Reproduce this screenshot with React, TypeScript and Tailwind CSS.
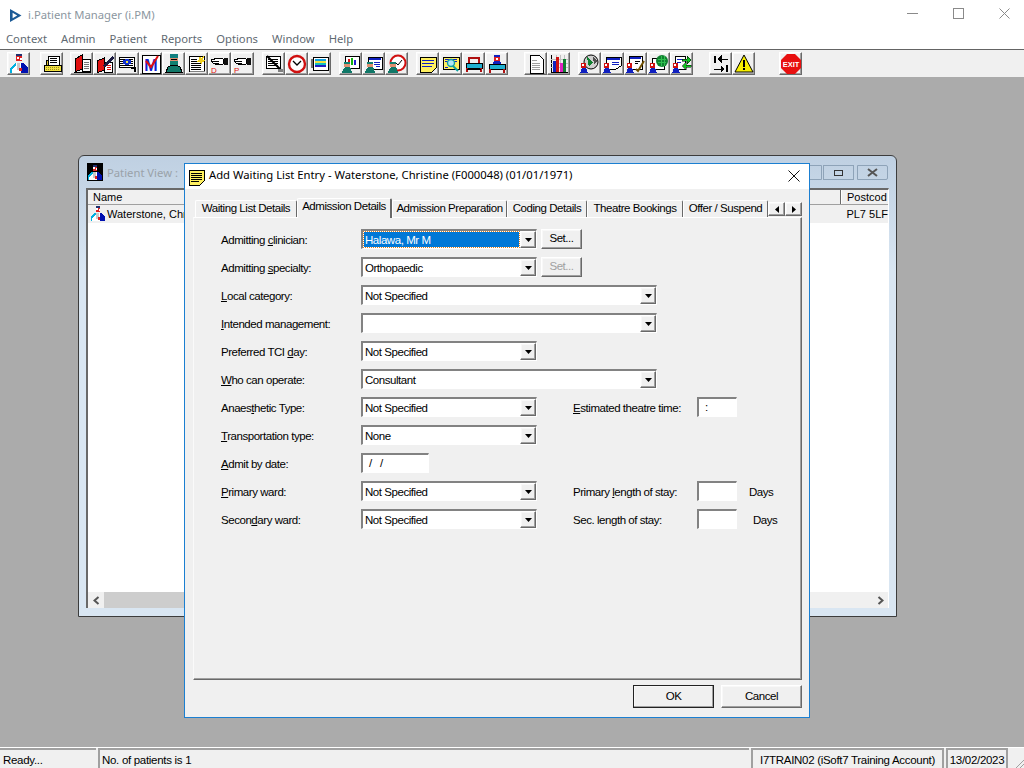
import type { ReactNode } from "react";

const font = "font-['Liberation_Sans',Arial,sans-serif]";
const uiFont = "font-['Noto_Sans',sans-serif] text-[11.25px]";
const raised =
  "border border-t-white border-l-white border-r-[#696969] border-b-[#696969] shadow-[inset_-1px_-1px_0_#a0a0a0,inset_1px_1px_0_#f8f8f8] bg-[#f0f0f0]";
const sunken =
  "border-t-2 border-l-2 border-r border-b border-t-[#828282] border-l-[#828282] border-r-white border-b-white bg-white";

// ---- little bitmap style pictures for the toolbar
function Ico({ children }: { children: ReactNode }) {
  return (
    <svg width="20" height="20" viewBox="0 0 20 20" shapeRendering="crispEdges">
      {children}
    </svg>
  );
}

function Doctor({ size = 20 }: { size?: number }) {
  return (
    <svg width={size} height={size} viewBox="0 0 20 20" shapeRendering="crispEdges">
      <rect x="7" y="0" width="6" height="2" fill="#203070" />
      <rect x="7" y="2" width="6" height="5" fill="#e02020" />
      <rect x="8" y="3" width="2" height="2" fill="#fff" />
      <rect x="11" y="4" width="2" height="2" fill="#fff" />
      <path d="M1 19 L1 14 L6 9 L14 9 L19 14 L19 19 Z" fill="#fff" />
      <path d="M1 19 L1 14 L6 9 L7 9 L7 11 L3 15 L3 19 Z" fill="#00b0e0" />
      <path d="M12 9 H14 L19 14 V19 H12 Z" fill="#0010b0" />
      <rect x="8" y="9" width="3" height="7" fill="#c8c8c8" />
      <rect x="10" y="14" width="3" height="3" fill="#e02020" />
    </svg>
  );
}

const Printer = () => (
  <Ico>
    <rect x="6" y="2" width="11" height="9" fill="#fff" stroke="#000" />
    <path d="M8 4h7M8 6h7M8 8h7" stroke="#000" />
    <path d="M4 6h2v5H4z" fill="#d8c030" stroke="#000" />
    <rect x="2" y="11" width="17" height="6" fill="#f0e040" stroke="#000" />
    <path d="M4 13h13M4 15h13" stroke="#a09020" strokeDasharray="1 1" />
  </Ico>
);
const RedBook = () => (
  <Ico>
    <path d="M3 5 L10 1 L10 15 L3 18 Z" fill="#e01010" stroke="#000" />
    <rect x="10" y="5" width="8" height="12" fill="#fff" stroke="#000" />
    <path d="M12 8h5M12 10h5M12 12h5M12 14h5" stroke="#777" />
    <rect x="2" y="18" width="17" height="1" fill="#000" />
  </Ico>
);
const BookPen = () => (
  <Ico>
    <path d="M2 7 L9 4 L9 16 L2 19 Z" fill="#e01010" stroke="#000" />
    <rect x="9" y="8" width="8" height="10" fill="#fff" stroke="#000" />
    <path d="M8 12 L17 2 L19 4 L10 14 Z" fill="#1a1a40" />
    <path d="M12 11h4M12 13h4M12 15h4" stroke="#e01010" />
  </Ico>
);
const EyeDoc = () => (
  <Ico>
    <rect x="1" y="3" width="15" height="10" fill="#fff" stroke="#000" />
    <path d="M2 5h13M2 7h13M2 9h13M2 11h13" stroke="#000" />
    <ellipse cx="9" cy="8" rx="4" ry="3" fill="#1030d0" />
    <circle cx="9" cy="8" r="1" fill="#f0e040" />
    <path d="M13 13h5v5h-2v-3h-3z" fill="#000" />
  </Ico>
);
const MLetter = () => (
  <Ico>
    <rect x="1" y="1" width="18" height="18" fill="#fff" stroke="#000" />
    <text x="10" y="17" textAnchor="middle" fontSize="16" fontWeight="700" fontFamily="Liberation Sans" fill="#1020d0">
      M
    </text>
    <path d="M5 7 L10 13 L17 2" fill="none" stroke="#e01010" strokeWidth="2" shapeRendering="auto" />
  </Ico>
);
const Surgeon = () => (
  <Ico>
    <rect x="6" y="0" width="8" height="4" fill="#108080" />
    <rect x="6" y="4" width="8" height="3" fill="#e09070" />
    <rect x="7" y="5" width="6" height="1" fill="#000" />
    <rect x="6" y="7" width="8" height="4" fill="#108070" />
    <path d="M2 18 L4 13 L8 11 L12 11 L16 13 L18 18 Z" fill="#107868" stroke="#000" />
  </Ico>
);
const NoteStar = () => (
  <Ico>
    <rect x="2" y="2" width="15" height="15" fill="#fff" stroke="#000" />
    <path d="M4 5h6M4 7h6M4 9h10M4 11h10M4 13h10M4 15h10" stroke="#000" />
    <path d="M13 1l1 3 3-2-1 4 3 1-4 1 0 3-2-3-3 0 2-3z" fill="#f0d020" />
    <rect x="3" y="17" width="15" height="1" fill="#808080" />
  </Ico>
);
const Hand = ({ letter }: { letter: string }) => (
  <Ico>
    <path d="M1 6 L8 4 L13 5 L13 10 L7 11 L3 9 Z" fill="#fff" stroke="#000" />
    <path d="M3 7h6M4 9h5" stroke="#000" />
    <rect x="14" y="4" width="4" height="7" fill="#101010" />
    <text x="1" y="19" fontSize="8" fontFamily="Liberation Sans" fill="#e01010">
      {letter}
    </text>
  </Ico>
);
const NoteCross = () => (
  <Ico>
    <rect x="2" y="2" width="14" height="12" fill="#fff" stroke="#000" />
    <path d="M4 5h10M4 7h10M4 9h10M4 11h10" stroke="#000" />
    <path d="M3 2 L18 17" stroke="#000" strokeWidth="2" shapeRendering="auto" />
    <rect x="14" y="15" width="5" height="3" fill="#808080" />
  </Ico>
);
const Clock = () => (
  <Ico>
    <circle cx="10" cy="10" r="8" fill="#fff" stroke="#d01010" strokeWidth="2.4" shapeRendering="auto" />
    <path d="M6 7 L10 11 L14 7" fill="none" stroke="#000" strokeWidth="1.3" shapeRendering="auto" />
  </Ico>
);
const Screen = () => (
  <Ico>
    <rect x="3" y="3" width="15" height="13" fill="#fff" stroke="#000" />
    <rect x="5" y="5" width="11" height="2" fill="#10a0e0" />
    <rect x="5" y="7" width="11" height="2" fill="#f0e040" />
    <rect x="5" y="9" width="11" height="2" fill="#10c0c0" />
    <rect x="5" y="11" width="11" height="2" fill="#2020c0" />
    <rect x="1" y="5" width="2" height="9" fill="#707070" />
  </Ico>
);
const SurgeonBadge = ({ children }: { children: ReactNode }) => (
  <Ico>
    {children}
    <rect x="3" y="10" width="6" height="3" fill="#e09070" />
    <rect x="3" y="8" width="6" height="2" fill="#108070" />
    <path d="M1 19 L2 15 L4 13 L8 13 L10 15 L11 19 Z" fill="#107868" />
  </Ico>
);
const SurgeonChart = () => (
  <SurgeonBadge>
    <rect x="4" y="2" width="14" height="12" fill="#fff" stroke="#000" />
    <rect x="7" y="5" width="2" height="6" fill="#e01010" />
    <rect x="10" y="4" width="2" height="7" fill="#10b010" />
    <rect x="13" y="6" width="2" height="5" fill="#2020d0" />
  </SurgeonBadge>
);
const SurgeonForm = () => (
  <SurgeonBadge>
    <rect x="4" y="3" width="14" height="12" fill="#fff" stroke="#000" />
    <rect x="5" y="4" width="12" height="2" fill="#1020c0" />
    <path d="M10 8h6M10 10h6M12 12h4" stroke="#1020c0" />
  </SurgeonBadge>
);
const SurgeonClock = () => (
  <SurgeonBadge>
    <circle cx="11" cy="9" r="7.5" fill="#fff" stroke="#d01010" strokeWidth="2" shapeRendering="auto" />
    <path d="M8 8 L11 11 L15 6" fill="none" stroke="#000" shapeRendering="auto" />
  </SurgeonBadge>
);
const YellowNote = () => (
  <Ico>
    <path d="M2 3 H18 V14 L14 18 H2 Z" fill="#fff060" stroke="#000" />
    <path d="M4 6h12M4 9h12M4 12h10" stroke="#1020c0" />
  </Ico>
);
const NoteSearch = () => (
  <Ico>
    <path d="M2 3 H18 V15 H2 Z" fill="#fff060" stroke="#000" />
    <path d="M4 5h12M4 7h3M13 7h3M4 13h3" stroke="#1020c0" />
    <circle cx="10" cy="9" r="3.5" fill="#b0e8f8" stroke="#10a0a0" strokeWidth="1.4" shapeRendering="auto" />
    <path d="M12 12 L17 17" stroke="#10a0a0" strokeWidth="2" shapeRendering="auto" />
  </Ico>
);
const Bed = () => (
  <Ico>
    <path d="M5 9 V4 H15 V9" fill="none" stroke="#b01010" strokeWidth="1.5" />
    <rect x="2" y="9" width="16" height="5" fill="#20b0d0" stroke="#000" />
    <path d="M3 14 V18 M17 14 V18" stroke="#b01010" strokeWidth="2" />
    <rect x="3" y="15" width="14" height="1" fill="#000" />
  </Ico>
);
const BedPerson = () => (
  <Ico>
    <rect x="7" y="1" width="6" height="2" fill="#1020c0" />
    <rect x="7" y="3" width="6" height="4" fill="#e02020" />
    <rect x="9" y="4" width="2" height="2" fill="#fff" />
    <path d="M5 11 L7 7 H13 L15 11 Z" fill="#1020c0" />
    <rect x="2" y="10" width="16" height="5" fill="#20b0d0" stroke="#000" />
    <path d="M3 15 V19 M17 15 V19" stroke="#b01010" strokeWidth="2" />
  </Ico>
);
const Page = () => (
  <Ico>
    <path d="M4 1 H13 L17 5 V19 H4 Z" fill="#fff" stroke="#000" />
    <path d="M6 6h5M6 9h8M6 11h8M6 13h8M6 15h8" stroke="#a0a0a0" />
  </Ico>
);
const Bars = () => (
  <Ico>
    <path d="M2 1 V18 H19" fill="none" stroke="#000" />
    <path d="M2 5h17M2 9h17M2 13h17M7 1v17M11 1v17M15 1v17" stroke="#c0c0c0" />
    <rect x="4" y="7" width="3" height="11" fill="#1020c0" />
    <rect x="7" y="3" width="3" height="15" fill="#d01010" />
    <rect x="11" y="9" width="3" height="9" fill="#e020c0" />
    <rect x="14" y="5" width="3" height="13" fill="#108030" />
  </Ico>
);
const SmallDoc = () => (
  <>
    <rect x="1" y="9" width="5" height="5" fill="#d01010" />
    <rect x="2" y="10" width="2" height="2" fill="#fff" />
    <path d="M0 19 L2 14 H6 L8 19 Z" fill="#1020c0" />
  </>
);
const GlobeDoc = () => (
  <Ico>
    <circle cx="11" cy="8" r="7" fill="#d0d0d0" stroke="#000" shapeRendering="auto" />
    <path d="M7 3 L13 8 L9 13 Z" fill="#108030" />
    <path d="M13 3 L17 7 L14 11 Z" fill="#505050" />
    <SmallDoc />
  </Ico>
);
const FormDoc = () => (
  <Ico>
    <path d="M3 3 H18 V12 L13 15 H3 Z" fill="#fff" stroke="#000" />
    <rect x="4" y="4" width="13" height="2" fill="#1020c0" />
    <path d="M9 8h7M9 10h7" stroke="#1020c0" />
    <SmallDoc />
  </Ico>
);
const TickDoc = () => (
  <Ico>
    <rect x="3" y="2" width="13" height="13" fill="#fff" stroke="#000" />
    <rect x="4" y="3" width="11" height="2" fill="#1020c0" />
    <path d="M9 7h5M9 9h3" stroke="#000" />
    <path d="M10 15 L12 17 L18 7" fill="none" stroke="#705000" strokeWidth="2" shapeRendering="auto" />
    <SmallDoc />
  </Ico>
);
const GreenGlobeDoc = () => (
  <Ico>
    <rect x="3" y="4" width="12" height="11" fill="#fff" stroke="#000" />
    <circle cx="13" cy="7" r="6" fill="#108030" shapeRendering="auto" />
    <path d="M9 5h8M9 8h8M12 2v10M15 2v10" stroke="#30c050" />
    <SmallDoc />
  </Ico>
);
const ArrowsDoc = () => (
  <Ico>
    <rect x="3" y="2" width="10" height="13" fill="#fff" stroke="#000" />
    <path d="M5 5h6M5 8h4" stroke="#1020c0" />
    <path d="M10 5h5V2l4 4-4 4V7h-5z" fill="#10c020" stroke="#000" strokeWidth="0.5" />
    <path d="M19 11h-5V8l-4 4 4 4v-3h5z" fill="#10c020" stroke="#000" strokeWidth="0.5" />
    <SmallDoc />
  </Ico>
);
const Split = () => (
  <Ico>
    <path d="M4 2 V9 M16 11 V18" stroke="#000" strokeWidth="1.5" />
    <path d="M17 5 H7 M7 5 L10 2 V8 Z" stroke="#000" fill="#000" />
    <path d="M3 15 H13 M13 15 L10 12 V18 Z" stroke="#000" fill="#000" />
  </Ico>
);
const Warning = () => (
  <Ico>
    <path d="M10 1 L19 18 H1 Z" fill="#f8f000" stroke="#000" shapeRendering="auto" />
    <rect x="9" y="6" width="2" height="7" fill="#000" />
    <rect x="9" y="14" width="2" height="2" fill="#000" />
  </Ico>
);
const ExitSign = () => (
  <Ico>
    <path d="M6 0 H14 L20 6 V14 L14 20 H6 L0 14 V6 Z" fill="#e81010" shapeRendering="auto" />
    <text x="10" y="13" textAnchor="middle" fontSize="7.5" fontWeight="700" fontFamily="Liberation Sans" fill="#fff">
      EXIT
    </text>
  </Ico>
);

const toolbar: ReactNode[][] = [
  [<Doctor key="a" />],
  [<Printer key="a" />],
  [
    <RedBook key="a" />,
    <BookPen key="b" />,
    <EyeDoc key="c" />,
    <MLetter key="d" />,
    <Surgeon key="e" />,
    <NoteStar key="f" />,
    <Hand key="g" letter="D" />,
    <Hand key="h" letter="P" />,
  ],
  [<NoteCross key="a" />, <Clock key="b" />, <Screen key="c" />],
  [<SurgeonChart key="a" />, <SurgeonForm key="b" />, <SurgeonClock key="c" />],
  [<YellowNote key="a" />, <NoteSearch key="b" />, <Bed key="c" />, <BedPerson key="d" />],
  [<Page key="a" />, <Bars key="b" />],
  [<GlobeDoc key="a" />, <FormDoc key="b" />, <TickDoc key="c" />, <GreenGlobeDoc key="d" />, <ArrowsDoc key="e" />],
  [<Split key="a" />, <Warning key="b" />],
  [<ExitSign key="a" />],
];
// left margin in front of each button group
const groupMargins = ["ml-[7px]", "ml-[10px]", "ml-[7px]", "ml-[8px]", "ml-[8px]", "ml-[8px]", "ml-[16px]", "ml-[8px]", "ml-[16px]", "ml-[24px]"];

const Arrow = ({ dir }: { dir: "down" | "left" | "right" }) => {
  const d = dir === "down" ? "M0 0h7L3.5 4z" : dir === "left" ? "M4 0v7L0 3.5z" : "M0 0v7L4 3.5z";
  const [w, h] = dir === "down" ? [7, 4] : [4, 7];
  return (
    <svg width={w} height={h} viewBox={`0 0 ${w} ${h}`}>
      <path d={d} fill="#000" />
    </svg>
  );
};

function Label({ text, u, w = "w-[140px]" }: { text: string; u: number; w?: string }) {
  return (
    <span className={`${w} shrink-0 text-black pt-[4px]`}>
      {text.slice(0, u)}
      <span className="underline">{text[u]}</span>
      {text.slice(u + 1)}
    </span>
  );
}

function Combo({ value, wide, focused }: { value: string; wide?: boolean; focused?: boolean }) {
  return (
    <div className={`${sunken} ${wide ? "w-[296px]" : "w-[176px]"} h-[20px] flex items-stretch shrink-0`}>
      <div className="flex-1 min-w-0 p-[1px] flex">
        <div
          className={
            focused
              ? "flex-1 bg-[#0078d7] text-white pl-[1px] leading-[16px] outline-1 outline-dotted outline-[#e08020]"
              : "flex-1 pl-[1px] leading-[16px]"
          }
        >
          {value}
        </div>
      </div>
      <div className={`${raised} w-[16px] flex items-center justify-center`}>
        <Arrow dir="down" />
      </div>
    </div>
  );
}

const TextBox = ({ w, value }: { w: string; value?: string }) => (
  <div className={`${sunken} ${w} h-[20px] leading-[16px] pl-[6px] shrink-0 whitespace-pre`}>{value}</div>
);

const SetButton = ({ disabled }: { disabled?: boolean }) => (
  <div className={`${raised} ml-[4px] w-[41px] h-[20px] flex items-center justify-center ${disabled ? "text-[#a0a0a0]" : ""}`}>
    Set...
  </div>
);

const Row = ({ children }: { children: ReactNode }) => (
  <div className="h-[20px] flex items-center">{children}</div>
);

const tabs = [
  { label: "Waiting List Details", w: "w-[102px]" },
  { label: "Admission Details", w: "w-[95px]", active: true },
  { label: "Admission Preparation", w: "w-[115px]" },
  { label: "Coding Details", w: "w-[80px]" },
  { label: "Theatre Bookings", w: "w-[96px]" },
  { label: "Offer / Suspend", w: "w-[85px]" },
];

function PatientView() {
  return (
    <div className="absolute left-[78px] top-[78px] w-[819px] h-[462px] rounded-t-[6px] border border-[#3c3c3c] bg-[#d6e4f1] bg-gradient-to-b from-[#bfd0e2] to-[#d9e6f2] to-[25%]">
      <div className="h-[32px] flex items-center pl-[8px] relative">
        <div className="bg-black h-[18px] w-[16px] flex items-end">
          <Doctor size={16} />
        </div>
        <span className={`ml-[4px] pt-[2px] text-[#9aa2a9] ${uiFont}`}>Patient View :</span>
        <div className="absolute right-[8px] top-[9px] flex">
          <div className="w-[31px] h-[15px] border border-[#8ea3b8] rounded-l-[2px]" />
          <div className="ml-[1px] w-[31px] h-[15px] border border-[#8ea3b8] flex items-center justify-center">
            <div className="w-[9px] h-[6px] border border-[#333] flex items-center justify-center" />
          </div>
          <div className="ml-[3px] w-[31px] h-[15px] border border-[#8ea3b8] rounded-r-[2px] flex items-center justify-center">
            <svg width="13" height="9" viewBox="0 0 13 9">
              <path d="M2 1 L11 8 M11 1 L2 8" stroke="#555" strokeWidth="2" />
            </svg>
          </div>
        </div>
      </div>
      <div className="mx-[7px] h-[420px] bg-white border-l-2 border-t-2 border-l-[#696969] border-t-[#696969] border-r border-r-white flex flex-col">
        <div className="h-[15px] flex bg-[#f0f0f0] border-b border-b-[#a0a0a0] shrink-0">
          <div className="pl-[5px] w-[753px] leading-[14px] border-r border-r-[#696969]">Name</div>
          <div className="pl-[5px] flex-1 leading-[14px] overflow-hidden whitespace-nowrap border-l border-l-white">Postcod</div>
        </div>
        <div className="h-[18px] flex items-center bg-[#f0f0f0] shrink-0">
          <div className="pl-[2px] w-[754px] flex items-center">
            <Doctor size={16} />
            <span className="ml-[1px]">Waterstone, Christine</span>
          </div>
          <div className="pl-[6px] whitespace-nowrap">PL7 5LF</div>
        </div>
        <div className="flex-1" />
        <div className="h-[16px] bg-[#f0f0f0] flex items-stretch shrink-0">
          <div className="w-[16px] flex items-center justify-center">
            <svg width="7" height="9" viewBox="0 0 7 9">
              <path d="M5.5 1 L1.5 4.5 L5.5 8" fill="none" stroke="#555" strokeWidth="2" />
            </svg>
          </div>
          <div className="w-[600px] bg-[#cdcdcd]" />
          <div className="flex-1" />
          <div className="w-[16px] flex items-center justify-center">
            <svg width="7" height="9" viewBox="0 0 7 9">
              <path d="M1.5 1 L5.5 4.5 L1.5 8" fill="none" stroke="#555" strokeWidth="2" />
            </svg>
          </div>
        </div>
      </div>
    </div>
  );
}

function WaitingListDialog() {
  return (
    <div className="absolute left-[184px] top-[86px] w-[626px] h-[555px] bg-[#f0f0f0] border border-[#1b7fd1] flex flex-col text-[11.5px] tracking-[-0.45px]">
      <div className="h-[25px] bg-white flex items-center pl-[3px] shrink-0 relative tracking-normal">
        <svg width="18" height="18" viewBox="0 0 18 18" shapeRendering="crispEdges">
          <path d="M1 2 H16 V13 L12 17 H1 Z" fill="#fff060" stroke="#000" />
          <path d="M3 5h11M3 7h11M3 9h11M3 11h11M3 13h8" stroke="#000" />
        </svg>
        <span className={`ml-[3px] pb-[2px] text-black ${uiFont}`}>
          Add Waiting List Entry - Waterstone, Christine (F000048) (01/01/1971)
        </span>
        <svg className="absolute right-[9px] top-[6px]" width="12" height="12" viewBox="0 0 12 12">
          <path d="M0.5 0.5 L11.5 11.5 M11.5 0.5 L0.5 11.5" stroke="#111" strokeWidth="1" />
        </svg>
      </div>

      <div className="ml-[8px] mr-[7px] mt-[8px] flex-1 flex flex-col min-h-0">
        <div className="h-[20px] flex items-end pl-[2px] relative shrink-0">
          {tabs.map((t) =>
            t.active ? (
              <div
                key={t.label}
                className={`${t.w} h-[20px] -mb-[1px] z-10 bg-[#f0f0f0] border-t border-l border-t-white border-l-white border-r-2 border-r-[#696969] rounded-t-[2px] text-center leading-[15px] shrink-0`}
              >
                {t.label}
              </div>
            ) : (
              <div
                key={t.label}
                className={`${t.w} h-[17px] bg-[#f0f0f0] border-t border-l border-t-white border-l-white border-r border-r-[#696969] rounded-t-[2px] text-center leading-[15px] overflow-hidden whitespace-nowrap shrink-0`}
              >
                {t.label}
              </div>
            )
          )}
          <div className="absolute right-0 top-[5px] flex z-20">
            <div className={`${raised} w-[17px] h-[14px] flex items-center justify-center`}>
              <Arrow dir="left" />
            </div>
            <div className={`${raised} w-[17px] h-[14px] flex items-center justify-center`}>
              <Arrow dir="right" />
            </div>
          </div>
        </div>

        <div className="h-[463px] border-t border-l border-t-white border-l-[#fafafa] border-r border-b border-r-[#696969] border-b-[#696969] shadow-[inset_-1px_-1px_0_#a0a0a0] pl-[27px] pt-[11px] flex flex-col gap-[8px] shrink-0">
          <Row>
            <Label text="Admitting clinician:" u={10} />
            <Combo value="Halawa, Mr M" focused />
            <SetButton />
          </Row>
          <Row>
            <Label text="Admitting specialty:" u={10} />
            <Combo value="Orthopaedic" />
            <SetButton disabled />
          </Row>
          <Row>
            <Label text="Local category:" u={0} />
            <Combo value="Not Specified" wide />
          </Row>
          <Row>
            <Label text="Intended management:" u={0} />
            <Combo value="" wide />
          </Row>
          <Row>
            <Label text="Preferred TCI day:" u={14} />
            <Combo value="Not Specified" />
          </Row>
          <Row>
            <Label text="Who can operate:" u={0} />
            <Combo value="Consultant" wide />
          </Row>
          <Row>
            <Label text="Anaesthetic Type:" u={5} />
            <Combo value="Not Specified" />
            <span className="ml-[36px] pt-[4px] w-[124px] shrink-0">
              <span className="underline">E</span>stimated theatre time:
            </span>
            <TextBox w="w-[40px]" value=":" />
          </Row>
          <Row>
            <Label text="Transportation type:" u={0} />
            <Combo value="None" />
          </Row>
          <Row>
            <Label text="Admit by date:" u={0} />
            <TextBox w="w-[68px]" value="/   /" />
          </Row>
          <Row>
            <Label text="Primary ward:" u={0} />
            <Combo value="Not Specified" />
            <span className="ml-[36px] pt-[4px] w-[124px] shrink-0">
              Primary <span className="underline">l</span>ength of stay:
            </span>
            <TextBox w="w-[40px]" />
            <span className="ml-[12px] pt-[4px]">Days</span>
          </Row>
          <Row>
            <Label text="Secondary ward:" u={5} />
            <Combo value="Not Specified" />
            <span className="ml-[36px] pt-[4px] w-[124px] shrink-0">Sec. length of stay:</span>
            <TextBox w="w-[40px]" />
            <span className="ml-[16px] pt-[4px]">Days</span>
          </Row>
        </div>

        <div className="flex justify-end gap-[7px] mt-[5px]">
          <div className={`${raised} w-[81px] h-[23px] flex items-center justify-center outline outline-1 -outline-offset-1 outline-[#222]`}>
            OK
          </div>
          <div className={`${raised} w-[81px] h-[23px] flex items-center justify-center`}>Cancel</div>
        </div>
      </div>
    </div>
  );
}

export default function App() {
  return (
    <div className={`w-screen h-screen overflow-hidden flex flex-col bg-white text-[11px] text-black ${font}`}>
      {/* title bar */}
      <div className="h-[30px] flex items-center bg-white shrink-0 relative">
        <svg className="ml-[9px]" width="14" height="15" viewBox="0 0 14 15">
          <path d="M1 1 L12.5 7.5 L1 14 Z M3.6 4.8 V10.2 L8.2 7.5 Z" fillRule="evenodd" fill="#1b5a96" />
        </svg>
        <span className={`ml-[5px] text-[#8c979f] ${uiFont}`}>i.Patient Manager (i.PM)</span>
        <svg className="absolute left-[907px] top-[13px]" width="11" height="1" viewBox="0 0 11 1">
          <rect width="11" height="1" fill="#8a8a8a" />
        </svg>
        <svg className="absolute left-[953px] top-[8px]" width="11" height="11" viewBox="0 0 11 11">
          <rect x="0.5" y="0.5" width="10" height="10" fill="none" stroke="#8a8a8a" />
        </svg>
        <svg className="absolute left-[999px] top-[8px]" width="11" height="11" viewBox="0 0 11 11">
          <path d="M0.5 0.5 L10.5 10.5 M10.5 0.5 L0.5 10.5" stroke="#8a8a8a" />
        </svg>
      </div>

      {/* menu */}
      <div className={`h-[19px] flex items-center pl-[6px] gap-[14px] text-[#5f6a72] shrink-0 ${uiFont}`}>
        {["Context", "Admin", "Patient", "Reports", "Options", "Window", "Help"].map((m) => (
          <span key={m}>{m}</span>
        ))}
      </div>

      {/* toolbar */}
      <div className="h-[28px] flex items-start pt-[2px] bg-[#f0f0f0] border-t border-t-[#646464] shrink-0">
        {toolbar.map((group, i) => (
          <div key={i} className={`flex ${groupMargins[i]}`}>
            {group.map((icon, j) => (
              <div key={j} className={`${raised} w-[23px] h-[23px] flex items-center justify-center`}>
                {icon}
              </div>
            ))}
          </div>
        ))}
      </div>

      {/* mdi area */}
      <div className="flex-1 relative bg-[#ababab] min-h-0">
        <PatientView />
        <WaitingListDialog />
      </div>

      {/* status bar */}
      <div className="h-[21px] bg-[#f0f0f0] border-t border-t-white flex items-stretch gap-[2px] shrink-0 text-[11.5px] tracking-[-0.3px] relative">
        <div className="w-[96px] border-t-2 border-t-[#a0a0a0] pl-[3px] leading-[20px]">Ready...</div>
        <div className="w-[651px] border-t-2 border-l-2 border-t-[#a0a0a0] border-l-[#a0a0a0] pl-[2px] leading-[20px]">No. of patients is 1</div>
        <div className="w-[193px] border-t-2 border-l-2 border-r-2 border-[#a0a0a0] border-b-0 text-center leading-[20px] whitespace-nowrap">I7TRAIN02 (iSoft7 Training Account)</div>
        <div className="w-[62px] border-t-2 border-l-2 border-r-2 border-[#a0a0a0] border-b-0 text-center leading-[20px] whitespace-nowrap">13/02/2023</div>
        <svg className="absolute right-0 bottom-0" width="11" height="11" viewBox="0 0 11 11">
          <path d="M11 3 L3 11 M11 7 L7 11" stroke="#a0a0a0" />
        </svg>
      </div>
    </div>
  );
}
